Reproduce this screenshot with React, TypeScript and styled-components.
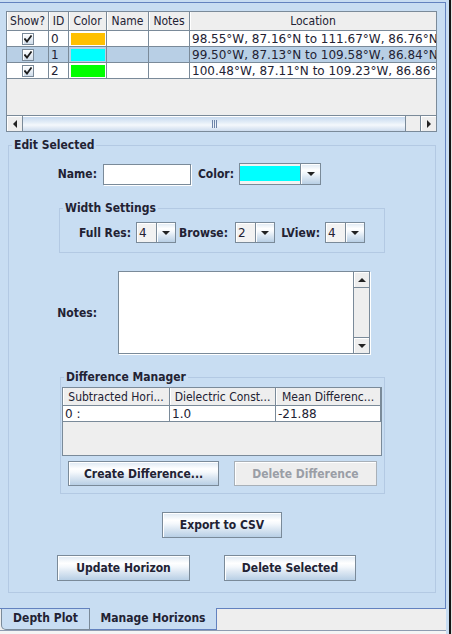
import React from "react";
import styled, { createGlobalStyle } from "styled-components";

const C = {
  panel: "#c8ddf2",
  line: "#7a8a99",
  group: "#b3c9e3",
  gray: "#eeeeee",
  sel: "#b8cfe5",
  tabBorder: "#6382bf",
  text: "#222233",
};

const SANS = `"DejaVu Sans", "Liberation Sans", sans-serif`;
const COND = `"DejaVu Sans Condensed", "DejaVu Sans", sans-serif`;
const BTN_GRAD = `linear-gradient(to bottom, #dde8f3 0%, #ffffff 30%, #f4f8fc 45%, #dde8f3 65%, #b8cfe5 100%)`;

const GlobalStyle = createGlobalStyle`
  html, body { margin: 0; padding: 0; }
  body {
    width: 452px; height: 634px; overflow: hidden;
    background: ${C.gray};
    font-family: ${SANS};
    color: ${C.text};
  }
  * { box-sizing: border-box; }
`;

const Page = styled.div`
  width: 452px;
  height: 634px;
  display: flex;
  background: ${C.panel};
`;

const Pane = styled.div`
  width: 446px;
  display: flex;
  flex-direction: column;
`;

const RightEdge = styled.div`
  width: 6px;
  height: 634px;
  background: linear-gradient(to right, ${C.panel} 0 3px, #161616 3px 5px, #e4e4e4 5px);
`;

const Content = styled.div`
  margin-top: 2px;
  height: 607px;
  background: ${C.panel};
  border-top: 1px solid ${C.tabBorder};
  border-right: 1px solid ${C.tabBorder};
  border-bottom: 1px solid ${C.tabBorder};
  padding: 8px 0 0 6px;
  display: flex;
  flex-direction: column;
  align-items: flex-start;
`;

/* ---------- tables ---------- */

const Frame = styled.div<{ $w: number; $h: number; $ml?: number; $mt?: number }>`
  width: ${(p) => p.$w}px;
  height: ${(p) => p.$h}px;
  margin: ${(p) => p.$mt ?? 0}px 0 0 ${(p) => p.$ml ?? 0}px;
  border: 1px solid ${C.line};
  background: ${C.gray};
  display: flex;
  flex-direction: column;
  overflow: hidden;
  flex-shrink: 0;
`;

const Viewport = styled.div`
  flex: 1;
  overflow: hidden;
`;

const Grid = styled.div<{ $cols: string }>`
  display: grid;
  grid-template-columns: ${(p) => p.$cols};
`;

const HeadCell = styled.div<{ $h: number; $last?: boolean }>`
  height: ${(p) => p.$h}px;
  border-right: ${(p) => (p.$last ? "none" : `1px solid ${C.line}`)};
  border-bottom: 1px solid ${C.line};
  background: ${C.gray};
  box-shadow: inset 1px 0 0 #ffffff;
  font-family: ${COND};
  font-stretch: condensed;
  font-size: 12px;
  display: flex;
  align-items: center;
  justify-content: center;
  padding: 0 2px;
  white-space: nowrap;
  overflow: hidden;
`;

const Cell = styled.div<{ $sel?: boolean; $last?: boolean; $center?: boolean }>`
  height: 16px;
  border-bottom: 1px solid ${C.line};
  border-right: ${(p) => (p.$last ? "none" : `1px solid ${C.line}`)};
  background: ${(p) => (p.$sel ? C.sel : "#ffffff")};
  font-family: ${SANS};
  font-size: 12px;
  padding: 0 1px 0 2px;
  white-space: nowrap;
  overflow: hidden;
  display: flex;
  align-items: center;
  justify-content: ${(p) => (p.$center ? "center" : "flex-start")};
`;

const SwatchCell = styled.div<{ $sel?: boolean }>`
  height: 16px;
  border-bottom: 1px solid ${C.line};
  border-right: 1px solid ${C.line};
  background: ${(p) => (p.$sel ? C.sel : "#ffffff")};
  padding: 2px 1px 1px 2px;
  display: flex;
`;

const Swatch = styled.div<{ $c: string }>`
  flex: 1;
  background: ${(p) => p.$c};
`;

const CheckBox = styled.div`
  width: 12px;
  height: 12px;
  border: 1px solid ${C.line};
  background: linear-gradient(to bottom, #ffffff, #cfdcea);
  box-shadow: inset 1px 1px 0 #fff;
  display: flex;
  align-items: center;
  justify-content: center;
`;

/* ---------- scrollbars ---------- */

const HScroll = styled.div`
  height: 16px;
  border-top: 1px solid ${C.line};
  background: ${C.gray};
  display: flex;
  flex-shrink: 0;
`;

const ArrowBtn = styled.div<{ $dir: "left" | "right" | "up" | "down" }>`
  ${(p) => (p.$dir === "left" || p.$dir === "right" ? "width: 16px;" : "height: 16px;")}
  flex-shrink: 0;
  background: ${C.gray};
  box-shadow: inset 1px 1px 0 #ffffff;
  display: flex;
  align-items: center;
  justify-content: center;
  ${(p) =>
    p.$dir === "left"
      ? `border-right: 1px solid ${C.line};`
      : p.$dir === "right"
      ? `border-left: 1px solid ${C.line};`
      : p.$dir === "up"
      ? `border-bottom: 1px solid ${C.line};`
      : `border-top: 1px solid ${C.line};`}
  &::after {
    content: "";
    width: 0;
    height: 0;
    ${(p) =>
      p.$dir === "left"
        ? `border-top: 4px solid transparent; border-bottom: 4px solid transparent; border-right: 4px solid #222;`
        : p.$dir === "right"
        ? `border-top: 4px solid transparent; border-bottom: 4px solid transparent; border-left: 4px solid #222;`
        : p.$dir === "up"
        ? `border-left: 4px solid transparent; border-right: 4px solid transparent; border-bottom: 4px solid #222;`
        : `border-left: 4px solid transparent; border-right: 4px solid transparent; border-top: 4px solid #222;`}
  }
`;

const Thumb = styled.div<{ $w: number }>`
  width: ${(p) => p.$w}px;
  flex-shrink: 0;
  border-right: 1px solid ${C.line};
  background: linear-gradient(to bottom, #c2d6ee 0%, #e6eff8 45%, #f4f8fc 60%, #cddcee 100%);
  box-shadow: inset 0 1px 0 #ffffff;
  display: flex;
  align-items: center;
  justify-content: center;
  gap: 1px;
`;

const Track = styled.div`
  flex: 1;
`;

const Grip = styled.div`
  width: 1px;
  height: 8px;
  background: #6d84a8;
`;

const VScroll = styled.div`
  width: 16px;
  border-left: 1px solid ${C.line};
  background: ${C.gray};
  display: flex;
  flex-direction: column;
  justify-content: space-between;
`;

/* ---------- groups & rows ---------- */

const Group = styled.fieldset<{ $w: number; $h: number; $ml: number; $mt: number }>`
  margin: ${(p) => p.$mt}px 0 0 ${(p) => p.$ml}px;
  padding: 0;
  width: ${(p) => p.$w}px;
  height: ${(p) => p.$h}px;
  min-width: 0;
  border: 1px solid ${C.group};
  display: flex;
  flex-direction: column;
  align-items: flex-start;
  flex-shrink: 0;
`;

const Legend = styled.legend`
  margin-left: 3px;
  padding: 0 2px;
  font-family: ${COND};
  font-stretch: condensed;
  font-weight: bold;
  font-size: 12px;
  line-height: 14px;
  color: ${C.text};
`;

const Row = styled.div<{ $mt: number; $ml: number; $h: number; $gap?: number }>`
  margin: ${(p) => p.$mt}px 0 0 ${(p) => p.$ml}px;
  height: ${(p) => p.$h}px;
  display: flex;
  align-items: center;
  gap: ${(p) => p.$gap ?? 0}px;
  flex-shrink: 0;
`;

const Label = styled.span<{ $w: number; $mr: number }>`
  width: ${(p) => p.$w}px;
  margin-right: ${(p) => p.$mr}px;
  text-align: right;
  flex-shrink: 0;
  white-space: nowrap;
  font-family: ${COND};
  font-stretch: condensed;
  font-weight: bold;
  font-size: 12px;
  color: ${C.text};
`;

const TextField = styled.div`
  width: 88px;
  height: 21px;
  flex-shrink: 0;
  background: #ffffff;
  border: 1px solid ${C.line};
  box-shadow: 1px 1px 0 #ffffff;
`;

const Combo = styled.div<{ $w: number; $h: number }>`
  width: ${(p) => p.$w}px;
  height: ${(p) => p.$h}px;
  flex-shrink: 0;
  border: 1px solid ${C.line};
  display: flex;
`;

const ComboValue = styled.div`
  flex: 1;
  background: #f2f2f2;
  box-shadow: inset 1px 1px 0 #ffffff;
  font-family: ${SANS};
  font-size: 12px;
  padding-left: 2px;
  display: flex;
  align-items: center;
`;

const ColorValue = styled.div`
  flex: 1;
  background: #f2f2f2;
  padding: 2px 0 2px 0;
  display: flex;
  flex-direction: column;
`;

const ColorChip = styled.div<{ $c: string }>`
  height: 15px;
  background: ${(p) => p.$c};
`;

const ComboButton = styled.div<{ $w: number }>`
  width: ${(p) => p.$w}px;
  border-left: 1px solid ${C.line};
  background: ${BTN_GRAD};
  box-shadow: inset 1px 1px 0 #ffffff;
  display: flex;
  align-items: center;
  justify-content: center;
  &::after {
    content: "";
    width: 0;
    height: 0;
    border-left: 4px solid transparent;
    border-right: 4px solid transparent;
    border-top: 4px solid #222;
  }
`;

const TextAreaFrame = styled.div`
  width: 252px;
  height: 83px;
  flex-shrink: 0;
  border: 1px solid ${C.line};
  box-shadow: 1px 1px 0 #ffffff;
  background: #ffffff;
  display: flex;
`;

const TextAreaBody = styled.div`
  flex: 1;
  background: #ffffff;
`;

const Button = styled.div<{ $w: number; $h: number; $disabled?: boolean }>`
  width: ${(p) => p.$w}px;
  height: ${(p) => p.$h}px;
  flex-shrink: 0;
  border: 1px solid ${(p) => (p.$disabled ? "#a8b0b8" : C.line)};
  background: ${(p) => (p.$disabled ? "#eeeeee" : BTN_GRAD)};
  box-shadow: inset 1px 1px 0 #ffffff;
  font-family: ${COND};
  font-stretch: condensed;
  font-weight: bold;
  font-size: 12px;
  color: ${(p) => (p.$disabled ? "#9a9ea6" : C.text)};
  display: flex;
  align-items: center;
  justify-content: center;
  white-space: nowrap;
`;

/* ---------- tabs ---------- */

const TabStrip = styled.div`
  height: 25px;
  background: linear-gradient(to bottom, ${C.gray} 0 21px, #8e9bb0 21px 22px, #f4f4f4 22px);
  display: flex;
  align-items: flex-start;
  padding-left: 1px;
`;

const Tab = styled.div<{ $selected?: boolean; $w: number }>`
  width: ${(p) => p.$w}px;
  height: ${(p) => (p.$selected ? 22 : 21)}px;
  margin-top: ${(p) => (p.$selected ? -1 : 0)}px;
  background: ${C.panel};
  border-right: 1px solid ${(p) => (p.$selected ? C.tabBorder : C.line)};
  border-bottom: 1px solid ${(p) => (p.$selected ? C.tabBorder : C.line)};
  border-left: ${(p) => (p.$selected ? "none" : `1px solid ${C.line}`)};
  border-bottom-left-radius: ${(p) => (p.$selected ? 0 : 5)}px;
  font-family: ${COND};
  font-stretch: condensed;
  font-weight: bold;
  font-size: 12px;
  color: ${C.text};
  display: flex;
  align-items: center;
  justify-content: center;
  padding-bottom: 2px;
  flex-shrink: 0;
`;

/* ---------- data ---------- */

const horizons = [
  { id: 0, color: "#ffc000", loc: "98.55°W, 87.16°N to 111.67°W, 86.76°N", sel: false },
  { id: 1, color: "#00ffff", loc: "99.50°W, 87.13°N to 109.58°W, 86.84°N", sel: true },
  { id: 2, color: "#00ff00", loc: "100.48°W, 87.11°N to 109.23°W, 86.86°N", sel: false },
];

const Check = () => (
  <svg width="8" height="8" viewBox="0 0 8 8">
    <path d="M1 4.2 L3 6.6 L7 1.2" fill="none" stroke="#1d1d1d" strokeWidth="1.8" strokeLinecap="square" />
  </svg>
);

export default function App() {
  return (
    <>
      <GlobalStyle />
      <Page>
        <Pane>
          <Content>
            <Frame $w={431} $h={121}>
              <Viewport>
                <Grid $cols="42px 20px 38px 42px 41px 1fr">
                  <HeadCell $h={19}>Show?</HeadCell>
                  <HeadCell $h={19}>ID</HeadCell>
                  <HeadCell $h={19}>Color</HeadCell>
                  <HeadCell $h={19}>Name</HeadCell>
                  <HeadCell $h={19}>Notes</HeadCell>
                  <HeadCell $h={19} $last>
                    Location
                  </HeadCell>
                  {horizons.map((h) => (
                    <React.Fragment key={h.id}>
                      <Cell $sel={h.sel} $center>
                        <CheckBox>
                          <Check />
                        </CheckBox>
                      </Cell>
                      <Cell $sel={h.sel}>{h.id}</Cell>
                      <SwatchCell $sel={h.sel}>
                        <Swatch $c={h.color} />
                      </SwatchCell>
                      <Cell $sel={h.sel} />
                      <Cell $sel={h.sel} />
                      <Cell $sel={h.sel} $last>
                        {h.loc}
                      </Cell>
                    </React.Fragment>
                  ))}
                </Grid>
              </Viewport>
              <HScroll>
                <ArrowBtn $dir="left" />
                <Thumb $w={383}>
                  <Grip />
                  <Grip />
                  <Grip />
                </Thumb>
                <Track />
                <ArrowBtn $dir="right" />
              </HScroll>
            </Frame>

            <Group $w={428} $h={455} $ml={2} $mt={6}>
              <Legend>Edit Selected</Legend>

              <Row $mt={11} $ml={41} $h={22}>
                <Label $w={47} $mr={6}>
                  Name:
                </Label>
                <TextField />
                <Label $w={43} $mr={5}>
                  Color:
                </Label>
                <Combo $w={82} $h={22}>
                  <ColorValue>
                    <ColorChip $c="#00ffff" />
                  </ColorValue>
                  <ComboButton $w={20} />
                </Combo>
              </Row>

              <Group $w={326} $h={52} $ml={50} $mt={16}>
                <Legend>Width Settings</Legend>
                <Row $mt={7} $ml={10} $h={21}>
                  <Label $w={61} $mr={5}>
                    Full Res:
                  </Label>
                  <Combo $w={40} $h={21}>
                    <ComboValue>4</ComboValue>
                    <ComboButton $w={19} />
                  </Combo>
                  <Label $w={52} $mr={7}>
                    Browse:
                  </Label>
                  <Combo $w={40} $h={21}>
                    <ComboValue>2</ComboValue>
                    <ComboButton $w={19} />
                  </Combo>
                  <Label $w={45} $mr={5}>
                    LView:
                  </Label>
                  <Combo $w={40} $h={21}>
                    <ComboValue>4</ComboValue>
                    <ComboButton $w={19} />
                  </Combo>
                </Row>
              </Group>

              <Row $mt={18} $ml={41} $h={83}>
                <Label $w={47} $mr={21}>
                  Notes:
                </Label>
                <TextAreaFrame>
                  <TextAreaBody />
                  <VScroll>
                    <ArrowBtn $dir="up" />
                    <ArrowBtn $dir="down" />
                  </VScroll>
                </TextAreaFrame>
              </Row>

              <Group $w={325} $h={124} $ml={51} $mt={16}>
                <Legend>Difference Manager</Legend>
                <Frame $w={320} $h={69} $ml={1} $mt={3}>
                  <Viewport>
                    <Grid $cols="107px 106px 1fr">
                      <HeadCell $h={18}>Subtracted Hori...</HeadCell>
                      <HeadCell $h={18}>Dielectric Const...</HeadCell>
                      <HeadCell $h={18}>Mean Differenc...</HeadCell>
                      <Cell>0 :</Cell>
                      <Cell>1.0</Cell>
                      <Cell>-21.88</Cell>
                    </Grid>
                  </Viewport>
                </Frame>
                <Row $mt={5} $ml={7} $h={25} $gap={15}>
                  <Button $w={151} $h={25}>
                    Create Difference...
                  </Button>
                  <Button $w={143} $h={25} $disabled>
                    Delete Difference
                  </Button>
                </Row>
              </Group>

              <Row $mt={18} $ml={153} $h={26}>
                <Button $w={120} $h={26}>
                  Export to CSV
                </Button>
              </Row>

              <Row $mt={17} $ml={48} $h={26} $gap={34}>
                <Button $w={133} $h={26}>
                  Update Horizon
                </Button>
                <Button $w={132} $h={26}>
                  Delete Selected
                </Button>
              </Row>
            </Group>
          </Content>
          <TabStrip>
            <Tab $w={89}>Depth Plot</Tab>
            <Tab $w={127} $selected>
              Manage Horizons
            </Tab>
          </TabStrip>
        </Pane>
        <RightEdge />
      </Page>
    </>
  );
}
